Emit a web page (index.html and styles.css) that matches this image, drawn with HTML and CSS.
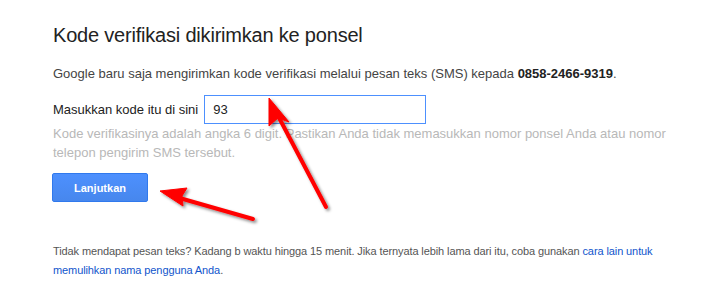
FILE: index.html
```html
<!DOCTYPE html>
<html lang="id">
<head>
  <meta charset="UTF-8" />
  <title>Verifikasi</title>
  <link rel="stylesheet" href="styles.css">
</head>
<body>

  <div class="page">
    <h1>Kode verifikasi dikirimkan ke ponsel</h1>
    <p class="intro">
      Google baru saja mengirimkan kode verifikasi melalui pesan teks (SMS) kepada <b>0858-2466-9319</b>.
    </p>

    <div class="field">
      <label for="kode">Masukkan kode itu di sini</label>
      <input type="text" id="kode" class="code-input" value="93">
    </div>
    <p class="hint">
      Kode verifikasinya adalah angka 6 digit. Pastikan Anda tidak memasukkan nomor ponsel Anda atau nomor
      telepon pengirim SMS tersebut.
    </p>

    <button class="btn">Lanjutkan</button>

    <p class="footer">
      Tidak mendapat pesan teks? Kadang b waktu hingga 15 menit. Jika ternyata lebih lama dari itu, coba gunakan
      <a href="#">cara lain untuk memulihkan nama pengguna Anda</a>.
    </p>
  </div>

  <!-- red annotation arrows -->
  <svg class="marks" width="712" height="307" viewBox="0 0 712 307">
    <defs>
      <filter id="shade" x="-20%" y="-20%" width="140%" height="140%">
        <feDropShadow dx="2" dy="2" stdDeviation="1.5" flood-color="#000" flood-opacity="0.45"/>
      </filter>
    </defs>
    <g fill="#f00" stroke="#f00" filter="url(#shade)">
      <line x1="326" y1="207" x2="276" y2="112" stroke-width="4" stroke-linecap="round"/>
      <polygon points="269,98 289,122 278,118 269,126" stroke-width="1" stroke-linejoin="round"/>
      <line x1="253" y1="219" x2="176" y2="197" stroke-width="4" stroke-linecap="round"/>
      <polygon points="160,191 187,188 182,196 183,206" stroke-width="1" stroke-linejoin="round"/>
    </g>
  </svg>

</body>
</html>
```

FILE: styles.css
```css
* {
  box-sizing: border-box;
  margin: 0;
  padding: 0;
}

body {
  font-family: Arial, 'Liberation Sans', sans-serif;
  background: #fff;
  color: #444;
  font-size: 13px;
  position: relative;
  width: 712px;
  height: 307px;
  overflow: hidden;
}

.page {
  padding: 23px 0 0 53px;
  width: 680px;
}

h1 {
  font-size: 20px;
  font-weight: normal;
  color: #222;
  line-height: 24px;
  letter-spacing: -0.2px;
  margin-bottom: 18px;
}

.intro {
  line-height: 17px;
  margin-bottom: 13px;
}

.intro b {
  color: #222;
}

.field {
  display: flex;
  align-items: center;
  gap: 6px;
}

.field label {
  color: #222;
}

.code-input {
  width: 222px;
  height: 29px;
  border: 1px solid #4d90fe;
  padding: 0 8px;
  font-family: inherit;
  font-size: 13px;
  color: #222;
  outline: none;
}

.hint {
  color: #b8b8b8;
  line-height: 19px;
  width: 620px;
}

.btn {
  margin-top: 11px;
  margin-left: -1px;
  width: 96px;
  height: 29px;
  border: 1px solid #3079ed;
  border-radius: 2px;
  background: linear-gradient(#4d90fe, #4787ed);
  color: #fff;
  font-family: inherit;
  font-size: 11px;
  font-weight: bold;
}

.footer {
  margin-top: 40px;
  font-size: 11px;
  line-height: 19px;
  letter-spacing: -0.1px;
  color: #555;
  width: 620px;
}

.footer a {
  color: #15c;
  text-decoration: none;
}

.marks {
  position: absolute;
  left: 0;
  top: 0;
}
```
